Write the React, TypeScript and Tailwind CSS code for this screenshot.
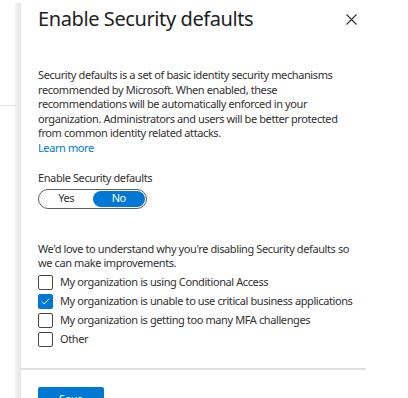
import React, { useState } from "react";

const reasons = [
  "My organization is using Conditional Access",
  "My organization is unable to use critical business applications",
  "My organization is getting too many MFA challenges",
  "Other",
];

export default function App() {
  const [enabled, setEnabled] = useState(false);
  const [checked, setChecked] = useState<boolean[]>([false, true, false, false]);

  return (
    <div
      className="relative w-[408px] h-[398px] overflow-hidden bg-white text-[#323130]"
      style={{ fontFamily: '"Noto Sans", "Open Sans", sans-serif' }}
    >
      {/* background hint behind the blade */}
      <div className="absolute left-0 top-[105px] w-[16px] h-px bg-[#e1e1e1]" />

      <div className="flex h-full">
        <div className="w-[15px] shrink-0" />
        <div className="w-[6px] shrink-0 mt-[3px] bg-gradient-to-r from-[#f3f3f3] to-[#e6e6e6]" />
        <div className="w-[345px] shrink-0 flex flex-col">
          <div className="flex items-start justify-between pl-[17px] pr-[8px] pt-[5px]">
            <h1 className="text-[20px] leading-[28px] font-normal tracking-[-0.4px] text-[#201f1e]">
              Enable Security defaults
            </h1>
            <button className="mt-[7px] w-[14px] h-[14px] flex items-center justify-center text-[#323130]">
              <svg width="11" height="11" viewBox="0 0 11 11">
                <path d="M0.5 0.5 L10.5 10.5 M10.5 0.5 L0.5 10.5" stroke="currentColor" strokeWidth="1.1" />
              </svg>
            </button>
          </div>

          <div className="pl-[17px] pr-[4px] pt-[35px] text-[11px] leading-[14.5px] tracking-[-0.4px]">
            <p>
              Security defaults is a set of basic identity security mechanisms
              <br />
              recommended by Microsoft. When enabled, these
              <br />
              recommendations will be automatically enforced in your
              <br />
              organization. Administrators and users will be better protected
              <br />
              from common identity related attacks.
            </p>
            <a href="#" className="block text-[#0078d4]">
              Learn more
            </a>

            <div className="mt-[16px]">Enable Security defaults</div>
            <div className="mt-[3px] flex w-[109px] h-[20px] rounded-full border border-[#605e5c] p-[1px]">
              <button
                onClick={() => setEnabled(true)}
                className={
                  enabled
                    ? "flex-1 rounded-full bg-[#0078d4] text-white text-[11px]"
                    : "flex-1 rounded-full text-[#323130] text-[11px]"
                }
              >
                Yes
              </button>
              <button
                onClick={() => setEnabled(false)}
                className={
                  !enabled
                    ? "flex-1 rounded-full bg-[#0078d4] text-white text-[11px]"
                    : "flex-1 rounded-full text-[#323130] text-[11px]"
                }
              >
                No
              </button>
            </div>

            <p className="mt-[33px]">
              We'd love to understand why you're disabling Security defaults so
              <br />
              we can make improvements.
            </p>
            <div className="mt-[4px] flex flex-col gap-[4px]">
              {reasons.map((r, i) => (
                <label key={r} className="flex items-center gap-[7px] h-[15px] cursor-pointer whitespace-nowrap">
                  <span
                    onClick={() => setChecked(checked.map((c, j) => (j === i ? !c : c)))}
                    className={
                      checked[i]
                        ? "w-[15px] h-[15px] shrink-0 rounded-[2px] bg-[#0078d4] flex items-center justify-center"
                        : "w-[15px] h-[15px] shrink-0 rounded-[2px] border border-[#484644] bg-white"
                    }
                  >
                    {checked[i] && (
                      <svg width="9" height="7" viewBox="0 0 9 7">
                        <path d="M0.8 3.6 L3.2 6 L8.2 0.8" fill="none" stroke="white" strokeWidth="0.9" />
                      </svg>
                    )}
                  </span>
                  <span>{r}</span>
                </label>
              ))}
            </div>
          </div>

          <div className="mt-auto" />
        </div>
      </div>

      {/* footer */}
      <div className="absolute left-[21px] top-[368px] w-[345px] h-[2px] bg-[#e1dfdd]" />
      <div className="absolute left-[38px] top-[385px] w-[66px] h-[13px] overflow-hidden">
        <button className="w-[66px] h-[24px] rounded-t-[2px] bg-[#0078d4] text-white text-[11px] leading-[22px]">
          Save
        </button>
      </div>
    </div>
  );
}
